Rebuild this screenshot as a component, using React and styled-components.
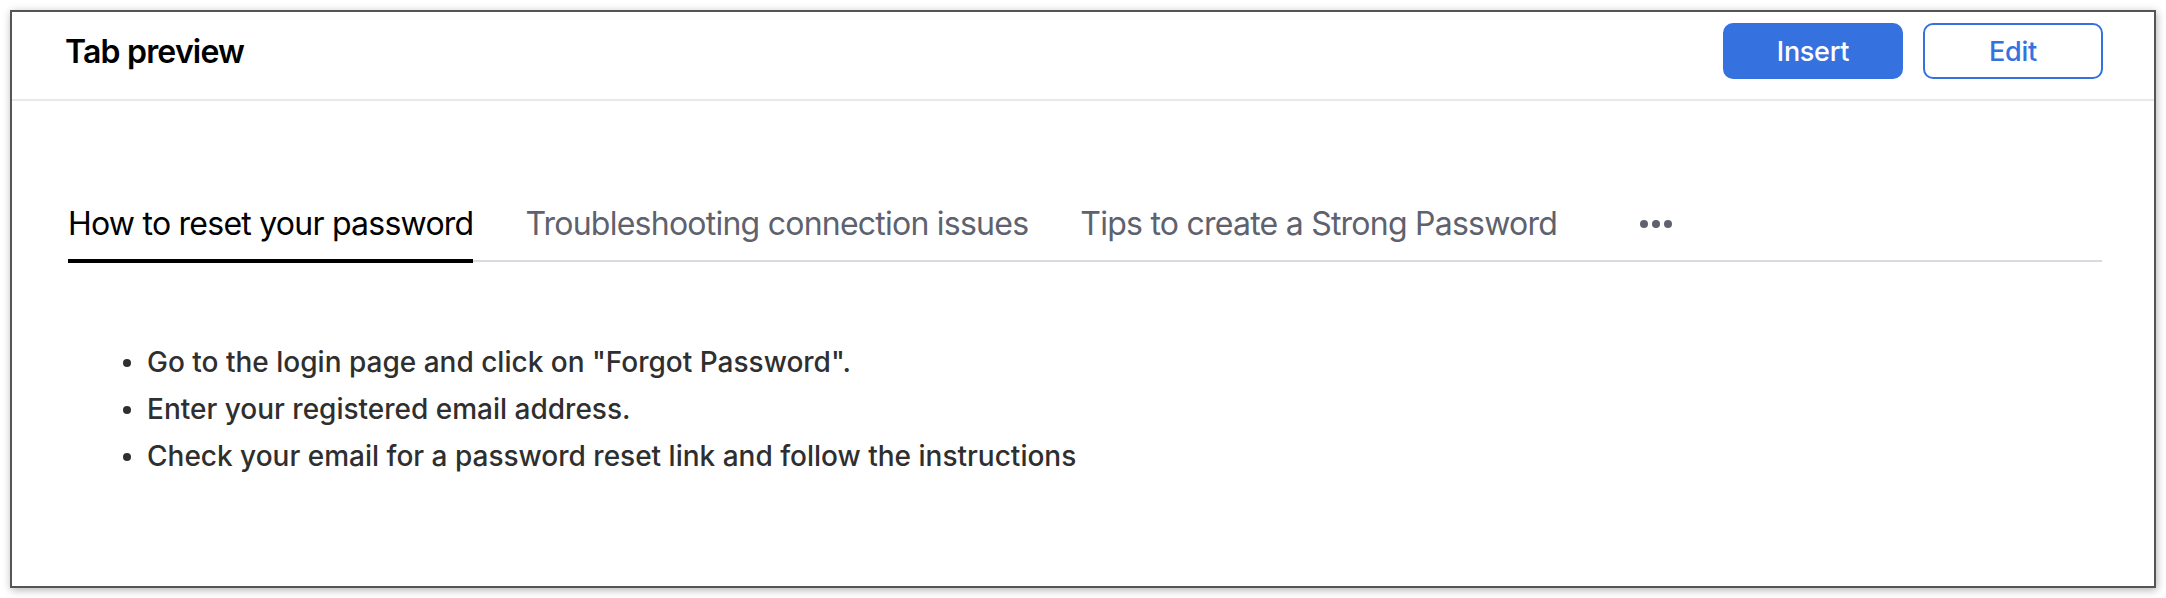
import React from "react";
import styled, { createGlobalStyle } from "styled-components";

const GlobalStyle = createGlobalStyle`
  html, body {
    margin: 0;
    padding: 0;
    background: #ffffff;
  }
  body {
    font-family: Inter, "Noto Sans", "Liberation Sans", sans-serif;
    -webkit-font-smoothing: antialiased;
  }
  * { box-sizing: border-box; }
`;

const Page = styled.div`
  padding: 10px;
`;

const Frame = styled.div`
  width: 2146px;
  height: 578px;
  border: 2px solid #555555;
  background: #ffffff;
  box-shadow: 1px 2px 8px rgba(0, 0, 0, 0.3);
  display: flex;
  flex-direction: column;
`;

const Header = styled.header`
  display: flex;
  align-items: center;
  justify-content: space-between;
  height: 89px;
  padding: 11px 51px 20px 53px;
  border-bottom: 2px solid #e8e9ed;
`;

const Title = styled.h1`
  margin: 0;
  font-size: 32px;
  font-weight: 560;
  letter-spacing: -0.8px;
  color: #000000;
`;

const Actions = styled.div`
  display: flex;
  gap: 20px;
`;

const Button = styled.button`
  width: 180px;
  height: 56px;
  border-radius: 10px;
  border: 2px solid #3572e0;
  background: ${(p) => (p.$primary ? "#3572e0" : "#ffffff")};
  color: ${(p) => (p.$primary ? "#ffffff" : "#3572e0")};
  font-family: inherit;
  font-size: 27px;
  font-weight: 500;
  letter-spacing: -0.3px;
  cursor: pointer;
`;

const Body = styled.section`
  padding: 103px 52px 0 56px;
`;

const TabList = styled.div`
  display: flex;
  align-items: flex-start;
  gap: 52px;
  border-bottom: 2px solid #d8dbe0;
`;

const Tab = styled.div`
  font-size: 32px;
  line-height: 40px;
  letter-spacing: -0.76px;
  padding-bottom: 15px;
  margin-bottom: -3px;
  border-bottom: 4px solid ${(p) => (p.$active ? "#000000" : "transparent")};
  color: ${(p) => (p.$active ? "#000000" : "#5d626e")};
  white-space: nowrap;
  cursor: pointer;
`;

const More = styled.div`
  display: flex;
  align-items: center;
  gap: 4px;
  height: 40px;
  margin-left: 31px;
`;

const Dot = styled.span`
  width: 8px;
  height: 8px;
  border-radius: 50%;
  background: #5d626e;
`;

const List = styled.ul`
  list-style: none;
  margin: 77px 0 0;
  padding: 0;
`;

const Item = styled.li`
  display: flex;
  align-items: center;
  gap: 16px;
  font-size: 28px;
  line-height: 47px;
  font-weight: 500;
  letter-spacing: 0;
  color: #2f2f2f;
`;

const Bullet = styled.span`
  flex: none;
  width: 8px;
  height: 8px;
  margin-left: 55px;
  border-radius: 50%;
  background: #2f2f2f;
`;

const tabs = [
  "How to reset your password",
  "Troubleshooting connection issues",
  "Tips to create a Strong Password",
];

const steps = [
  'Go to the login page and click on "Forgot Password".',
  "Enter your registered email address.",
  "Check your email for a password reset link and follow the instructions",
];

export default function App() {
  return (
    <>
      <GlobalStyle />
      <Page>
        <Frame>
          <Header>
            <Title>Tab preview</Title>
            <Actions>
              <Button $primary>Insert</Button>
              <Button>Edit</Button>
            </Actions>
          </Header>
          <Body>
            <TabList>
              {tabs.map((t, i) => (
                <Tab key={t} $active={i === 0}>
                  {t}
                </Tab>
              ))}
              <More aria-label="More tabs">
                <Dot />
                <Dot />
                <Dot />
              </More>
            </TabList>
            <List>
              {steps.map((s) => (
                <Item key={s}>
                  <Bullet />
                  <span>{s}</span>
                </Item>
              ))}
            </List>
          </Body>
        </Frame>
      </Page>
    </>
  );
}
